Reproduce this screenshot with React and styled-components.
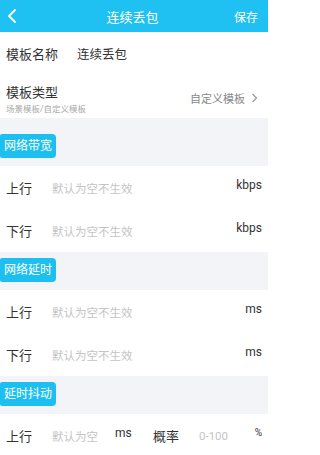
import React from "react";
import styled, { createGlobalStyle } from "styled-components";

const GlobalStyle = createGlobalStyle`
  html, body {
    margin: 0;
    padding: 0;
    background: #ffffff;
  }
  body {
    font-family: Roboto, "Noto Sans CJK SC", sans-serif;
    color: #333333;
  }
`;

const Page = styled.div`
  width: 268px;
  height: 455px;
  overflow: hidden;
  background: #ffffff;
`;

const Header = styled.div`
  height: 32px;
  background: #1fc0f2;
  display: flex;
  align-items: center;
  justify-content: space-between;
  padding: 0 10px 0 3px;
  color: #ffffff;
`;

const Title = styled.div`
  font-size: 13px;
  position: relative;
  left: 6px;
`;

const Save = styled.div`
  font-size: 12px;
`;

const InfoRow = styled.div`
  height: ${(p) => p.h}px;
  display: flex;
  align-items: center;
  padding: 0 10px 0 6px;
  box-sizing: border-box;
`;

const Label = styled.div`
  font-size: 13px;
  color: #333333;
  width: ${(p) => p.w || 46}px;
  flex-shrink: 0;
`;

const Value = styled.div`
  font-size: 12.5px;
  color: #333333;
`;

const TypeBlock = styled.div`
  display: flex;
  flex-direction: column;
  flex: 1;
  padding-top: 2px;
`;

const SubLabel = styled.div`
  font-size: 8.5px;
  color: #aaaaaa;
  margin-top: 1px;
`;

const Pick = styled.div`
  font-size: 11px;
  color: #888888;
  display: flex;
  align-items: center;
  gap: 6px;
  padding-top: 3px;
`;

const Band = styled.div`
  background: #f3f4f8;
  padding: ${(p) => (p.first ? "16px" : "6px")} 0 8px;
`;

const Badge = styled.div`
  display: inline-block;
  background: #1dbff0;
  color: #ffffff;
  font-size: 12px;
  line-height: 24px;
  padding: 0 4px 0 4px;
  border-radius: 2px 4px 4px 2px;
`;

const FieldRow = styled.div`
  height: 43px;
  display: flex;
  align-items: center;
  padding: 0 6px;
  box-sizing: border-box;
`;

const Placeholder = styled.div`
  font-size: 11.5px;
  color: #c4c4c4;
  flex: ${(p) => (p.w ? "none" : 1)};
  width: ${(p) => (p.w ? `${p.w}px` : "auto")};
`;

const Unit = styled.div`
  font-size: ${(p) => p.size || 12}px;
  color: #333333;
  width: ${(p) => (p.w ? `${p.w}px` : "auto")};
  flex-shrink: 0;
  position: relative;
  top: -3px;
`;

const Back = () => (
  <svg width="16" height="18" viewBox="0 0 16 18">
    <path d="M12 3 L6 9 L12 15" fill="none" stroke="#ffffff" strokeWidth="1.8" strokeLinecap="round" strokeLinejoin="round" />
  </svg>
);

const Chevron = () => (
  <svg width="7" height="10" viewBox="0 0 7 10">
    <path d="M1.5 1 L5.5 5 L1.5 9" fill="none" stroke="#999999" strokeWidth="1.2" />
  </svg>
);

const Section = ({ title, first, children }) => (
  <>
    <Band first={first}>
      <Badge>{title}</Badge>
    </Band>
    {children}
  </>
);

const Field = ({ label, unit }) => (
  <FieldRow>
    <Label>{label}</Label>
    <Placeholder>默认为空不生效</Placeholder>
    <Unit>{unit}</Unit>
  </FieldRow>
);

export default function App() {
  return (
    <Page>
      <GlobalStyle />
      <Header>
        <Back />
        <Title>连续丢包</Title>
        <Save>保存</Save>
      </Header>
      <InfoRow h={43}>
        <Label w={71}>模板名称</Label>
        <Value>连续丢包</Value>
      </InfoRow>
      <InfoRow h={43}>
        <TypeBlock>
          <Label w={80}>模板类型</Label>
          <SubLabel>场景模板/自定义模板</SubLabel>
        </TypeBlock>
        <Pick>
          自定义模板
          <Chevron />
        </Pick>
      </InfoRow>
      <Section title="网络带宽" first>
        <Field label="上行" unit="kbps" />
        <Field label="下行" unit="kbps" />
      </Section>
      <Section title="网络延时">
        <Field label="上行" unit="ms" />
        <Field label="下行" unit="ms" />
      </Section>
      <Section title="延时抖动">
        <FieldRow>
          <Label>上行</Label>
          <Placeholder w={63}>默认为空</Placeholder>
          <Unit w={38}>ms</Unit>
          <Label>概率</Label>
          <Placeholder>0-100</Placeholder>
          <Unit size={10}>%</Unit>
        </FieldRow>
      </Section>
    </Page>
  );
}
